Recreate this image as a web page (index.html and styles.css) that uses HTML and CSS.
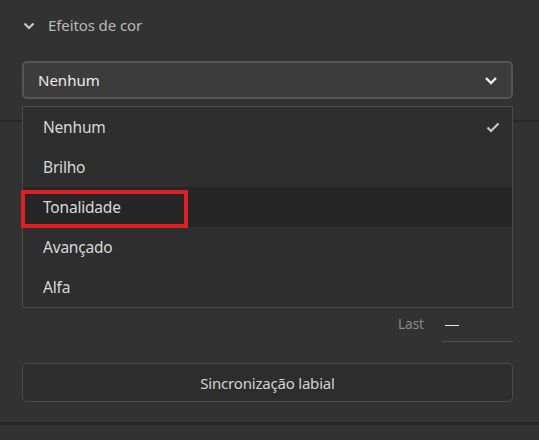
FILE: index.html
```html
<!DOCTYPE html>
<html lang="pt">
<head>
    <meta charset="UTF-8">
    <meta name="viewport" content="width=device-width, initial-scale=1.0">
    <title>Efeitos de cor</title>
    <link rel="stylesheet" href="styles.css">
</head>
<body>
    <div class="panel">
        <div class="section-header">
            <svg class="caret" width="12" height="8" viewBox="0 0 12 8">
                <path d="M1.5 1.5 L6 6 L10.5 1.5" fill="none" stroke="#c8c8c8" stroke-width="2.2"/>
            </svg>
            <span class="section-title">Efeitos de cor</span>
        </div>

        <div class="picker">
            <div class="select">
                <span>Nenhum</span>
                <svg width="14" height="9" viewBox="0 0 14 9">
                    <path d="M2 2 L7 7 L12 2" fill="none" stroke="#f0f0f0" stroke-width="2.4"/>
                </svg>
            </div>

            <ul class="menu">
                <li class="menu-item">Nenhum
                    <svg class="check" width="14" height="11" viewBox="0 0 14 11">
                        <path d="M1.5 5.5 L5 9 L12.5 1.5" fill="none" stroke="#c8c8c8" stroke-width="2.2"/>
                    </svg>
                </li>
                <li class="menu-item">Brilho</li>
                <li class="menu-item hover">Tonalidade</li>
                <li class="menu-item">Avançado</li>
                <li class="menu-item">Alfa</li>
            </ul>
            <div class="highlight"></div>
        </div>

        <div class="divider"></div>

        <div class="last-row">
            <span class="last-label">Last</span>
            <div class="last-field"><span class="dash"></span></div>
        </div>

        <button class="lipsync">Sincronização labial</button>
    </div>
    <div class="footer"></div>
</body>
</html>
```

FILE: styles.css
```css
* {
    box-sizing: border-box;
    margin: 0;
    padding: 0;
    font-family: "Noto Sans", "Open Sans", sans-serif;
}

body, html {
    width: 100%;
    height: 100%;
    background: #323232;
    color: #e0e0e0;
    overflow: hidden;
}

.panel {
    height: 422px;
    display: flex;
    flex-direction: column;
}

.section-header {
    height: 52px;
    display: flex;
    align-items: center;
    padding-left: 23px;
    gap: 13px;
}

.caret {
    margin-top: -1px;
}

.section-title {
    font-size: 15px;
    color: #b9b9b9;
    margin-top: -2px;
    letter-spacing: -0.1px;
}

.picker {
    position: relative;
    margin: 9px 26px 0 22px;
}

.select {
    height: 38px;
    border: 2px solid #555555;
    border-radius: 5px;
    background: #3c3c3c;
    display: flex;
    align-items: center;
    justify-content: space-between;
    padding: 0 13px 0 14px;
    font-size: 15px;
    color: #ececec;
}

/* dropdown list over the rest of the panel */
.menu {
    position: absolute;
    top: 45px;
    left: 0;
    right: 0;
    z-index: 2;
    list-style: none;
    background: #2e2e2e;
    border: 1px solid #4a4a4a;
}

.menu-item {
    height: 40px;
    display: flex;
    align-items: center;
    justify-content: space-between;
    padding: 0 12px 0 20px;
    font-size: 15.5px;
    letter-spacing: -0.2px;
    color: #d8d8d8;
}

.menu-item.hover {
    background: #262626;
}

/* red annotation box */
.highlight {
    position: absolute;
    top: 129px;
    left: -1px;
    width: 167px;
    height: 38px;
    border: 4px solid #df1f26;
    z-index: 3;
}

.divider {
    margin-top: 21px;
    height: 2px;
    background: #282828;
}

.last-row {
    margin: 189px 26px 0 0;
    display: flex;
    justify-content: flex-end;
    align-items: flex-end;
    gap: 18px;
}

.last-label {
    font-size: 13.5px;
    color: #8a8a8a;
    margin-bottom: 9px;
}

.last-field {
    width: 71px;
    height: 31px;
    border-bottom: 1px solid #4e4e4e;
    display: flex;
    align-items: center;
    padding-left: 3px;
}

.dash {
    width: 14px;
    height: 1px;
    background: #e8e8e8;
    margin-top: -2px;
}

.lipsync {
    margin: 21px 26px 0 22px;
    height: 39px;
    background: #2d2d2d;
    border: 1px solid #4a4a4a;
    border-radius: 5px;
    color: #d4d4d4;
    font-size: 15px;
    letter-spacing: -0.2px;
}

.footer {
    height: 3px;
    background: #252525;
}
```
